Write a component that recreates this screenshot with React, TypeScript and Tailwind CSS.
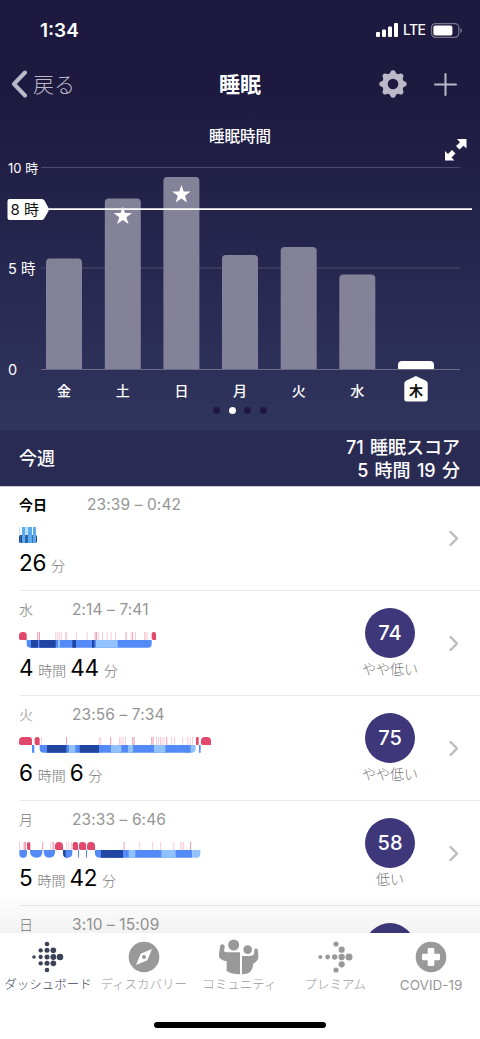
import { ReactNode } from 'react';

type Block = { x: number; w: number; fill: string; wake?: boolean; rl?: number; rr?: number };

interface SleepRow {
    day: string;
    range: string;
    total: [string, string][];
    blocks: Block[];
    ticks: number[];
    strongTicks: number[];
    score?: string;
    label?: string;
}

const DEEP = '#2146a1';
const LIGHT = '#538af8';
const REM = '#91c2fe';
const WAKE = '#e2486c';

const bars = [
    { day: '金', x: 46, h: 111 },
    { day: '土', x: 104.8, h: 171, star: 65.5 },
    { day: '日', x: 163.4, h: 192.5, star: 44 },
    { day: '月', x: 222, h: 114.5 },
    { day: '火', x: 280.7, h: 122.5 },
    { day: '水', x: 339.3, h: 95 },
    { day: '木', x: 398, h: 8.5, current: true },
];

const rows: SleepRow[] = [
    {
        day: '今日',
        range: '23:39 – 0:42',
        total: [['26', '分']],
        blocks: [],
        ticks: [],
        strongTicks: [],
    },
    {
        day: '水',
        range: '2:14 – 7:41',
        total: [['4', '時間'], ['44', '分']],
        blocks: [
            { x: 57, w: 23, fill: WAKE, wake: true, rl: 11, rr: 10 },
            { x: 80, w: 375, fill: LIGHT, rl: 12, rr: 12 },
            { x: 93, w: 21, fill: DEEP },
            { x: 118, w: 49, fill: DEEP },
            { x: 174, w: 6, fill: REM },
            { x: 217, w: 11, fill: DEEP },
            { x: 276, w: 7, fill: DEEP },
            { x: 288, w: 65, fill: REM },
            { x: 455, w: 13, fill: WAKE, wake: true, rl: 6, rr: 6 },
        ],
        ticks: [166, 172, 178, 184, 196, 199, 229, 260, 295, 306, 320, 332, 345, 392, 405, 432, 436, 440],
        strongTicks: [112, 117, 284, 288, 377, 397],
        score: '74',
        label: 'やや低い',
    },
    {
        day: '火',
        range: '23:56 – 7:34',
        total: [['6', '時間'], ['6', '分']],
        blocks: [
            { x: 57, w: 39, fill: WAKE, wake: true, rl: 12, rr: 10 },
            { x: 96, w: 7, fill: LIGHT },
            { x: 104, w: 15, fill: WAKE, wake: true, rl: 7, rr: 7 },
            { x: 119, w: 440, fill: LIGHT, rl: 12 },
            { x: 141, w: 58, fill: DEEP },
            { x: 207, w: 19, fill: REM },
            { x: 239, w: 58, fill: DEEP },
            { x: 333, w: 31, fill: REM },
            { x: 384, w: 15, fill: REM },
            { x: 462, w: 34, fill: REM },
            { x: 559, w: 28, fill: REM, rr: 12 },
            { x: 558, w: 14, fill: LIGHT },
            { x: 588, w: 8, fill: WAKE, wake: true, rl: 3, rr: 3 },
            { x: 597, w: 5, fill: LIGHT },
            { x: 603, w: 30, fill: WAKE, wake: true, rl: 12, rr: 12 },
        ],
        ticks: [124, 296, 301, 357, 362, 368, 375, 468, 474, 480, 485, 491, 514, 522, 546, 562, 569, 576],
        strongTicks: [198, 331, 397, 401, 454, 458, 499],
        score: '75',
        label: 'やや低い',
    },
    {
        day: '月',
        range: '23:33 – 6:46',
        total: [['5', '時間'], ['42', '分']],
        blocks: [
            { x: 58, w: 23, fill: LIGHT, rl: 11, rr: 11 },
            { x: 81, w: 10, fill: WAKE, wake: true, rl: 5, rr: 5 },
            { x: 90, w: 37, fill: LIGHT, rl: 20, rr: 17 },
            { x: 131, w: 34, fill: LIGHT, rl: 17, rr: 17 },
            { x: 165, w: 24, fill: WAKE, wake: true, rl: 12, rr: 12 },
            { x: 189, w: 14, fill: DEEP, rl: 12 },
            { x: 197, w: 20, fill: LIGHT, rr: 14 },
            { x: 218, w: 16, fill: WAKE, wake: true, rl: 7, rr: 7 },
            { x: 234, w: 3, fill: LIGHT },
            { x: 237, w: 21, fill: WAKE, wake: true, rl: 10, rr: 10 },
            { x: 258, w: 3, fill: LIGHT },
            { x: 261, w: 24, fill: WAKE, wake: true, rl: 11, rr: 11 },
            { x: 285, w: 292, fill: LIGHT, rl: 13 },
            { x: 303, w: 66, fill: DEEP },
            { x: 386, w: 20, fill: REM },
            { x: 484, w: 43, fill: REM },
            { x: 577, w: 24, fill: REM, rr: 12 },
        ],
        ticks: [57, 68, 151, 156, 199, 205, 213, 418, 457, 481, 520, 541, 545, 550],
        strongTicks: [73, 75, 127, 160, 371, 570],
        score: '58',
        label: '低い',
    },
    {
        day: '日',
        range: '3:10 – 15:09',
        total: [],
        blocks: [],
        ticks: [],
        strongTicks: [],
        score: '',
    },
];

// wake blocks round at the top, sleep blocks hang down and round at the bottom
function blockPath({ x, w, wake, rl = 0, rr = 0 }: Block) {
    const r = x + w;
    if (wake) {
        const b = Math.min(rl, 5);
        return `M${x} ${24 - b}V${rl}Q${x} 0 ${x + rl} 0H${r - rr}Q${r} 0 ${r} ${rr}V24H${x + b}Q${x} 24 ${x} ${24 - b}Z`;
    }
    return `M${x} 24H${r}V${47 - rr}Q${r} 47 ${r - rr} 47H${x + rl}Q${x} 47 ${x} ${47 - rl}Z`;
}

function Hypnogram({ row }: { row: SleepRow }) {
    return (
        <svg width="200" height="16" viewBox="57 0 600 48" className="block">
            {row.ticks.map((x) => (
                <rect key={x} x={x} y="0" width="2.5" height="24" fill="#f6c3cf" />
            ))}
            {row.strongTicks.map((x) => (
                <rect key={x} x={x} y="0" width="2.5" height="24" fill="#eb8ba1" />
            ))}
            {row.blocks.map((block, i) => (
                <path key={i} d={blockPath(block)} fill={block.fill} />
            ))}
        </svg>
    );
}

function NapGraph() {
    return (
        <svg width="18" height="16" viewBox="57 0 54 48" className="block">
            <rect x="57" y="24" width="54" height="24" rx="5" fill="#1c4b8b" />
            <path d="M58 0h3v24h-3zM77 0h4v24h-4z" fill="#bcdcf5" />
            <path d="M66 0h10v48h-10zM83 0h13v48h-13zM99 0h9v48h-9z" fill="#5cabec" />
            <path d="M60 24h3v24h-3zM78 24h2v24h-2z" fill="#2f6fb1" />
            <path d="M97 24h2v24h-2z" fill="#3f86c8" />
        </svg>
    );
}

function StatusBar() {
    return (
        <div className="flex h-[60px] items-center justify-between pl-10 pr-[18px]">
            <span className="text-[19px] font-semibold leading-none">1:34</span>
            <div className="flex items-center">
                <svg width="22" height="14" viewBox="0 0 22 14" fill="#fff">
                    <rect x="0" y="9" width="4" height="5" rx="1" />
                    <rect x="6" y="6.5" width="4" height="7.5" rx="1" />
                    <rect x="12" y="3.5" width="4" height="10.5" rx="1" />
                    <rect x="18" y="0" width="4" height="14" rx="1" />
                </svg>
                <span className="ml-[5px] w-[28px] text-[14px] font-medium leading-none tracking-[-0.6px]">LTE</span>
                <svg width="31" height="15" viewBox="0 0 31 15" fill="none">
                    <rect x="0.6" y="0.6" width="27.2" height="13.8" rx="4" stroke="#77758c" strokeWidth="1.2" />
                    <rect x="2.4" y="2.4" width="19" height="10.2" rx="2" fill="#fff" />
                    <path d="M29.3 5v5c1.1-.4 1.7-1.4 1.7-2.5s-.6-2.1-1.7-2.5z" fill="#77758c" />
                </svg>
            </div>
        </div>
    );
}

function NavBar() {
    return (
        <div className="grid h-12 grid-cols-3 items-center">
            <div className="flex items-center pl-[11px] text-[#bbb9c8]">
                <svg width="17" height="28" viewBox="0 0 17 28" fill="none" stroke="currentColor" strokeWidth="4" strokeLinecap="round" strokeLinejoin="round">
                    <path d="M14 2.5 3 14l11 11.5" />
                </svg>
                <span className="ml-[5px] text-[21px] font-light leading-none">戻る</span>
            </div>
            <h1 className="pt-px text-center text-[21px] font-bold leading-none">睡眠</h1>
            <div className="flex items-center justify-end gap-[27px] pr-[23px] text-[#bbb9c8]">
                <svg width="28" height="28" viewBox="-14 -14 28 28">
                    <circle r="8" fill="none" stroke="currentColor" strokeWidth="5.4" />
                    {[0, 45, 90, 135, 180, 225, 270, 315].map((a) => (
                        <path
                            key={a}
                            d="M-4.6-9.5Q-2.8-10.4-2.3-12.4Q-1.9-13.7 0-13.7Q1.9-13.7 2.3-12.4Q2.8-10.4 4.6-9.5Z"
                            fill="currentColor"
                            transform={`rotate(${a})`}
                        />
                    ))}
                </svg>
                <svg width="23" height="23" viewBox="0 0 23 23" stroke="currentColor" strokeWidth="2" strokeLinecap="round">
                    <path d="M11.5 1v21M1 11.5h21" />
                </svg>
            </div>
        </div>
    );
}

function SleepChart() {
    return (
        <svg width="480" height="254" viewBox="0 0 480 254" className="block" fill="#fff">
            <path d="M41 17.5H460M41 118H460" stroke="#4b4a6c" />
            {bars.map((bar) => (
                <path
                    key={bar.day}
                    d={`M${bar.x} 219.5v${4 - bar.h}q0-4 4-4h28q4 0 4 4v${bar.h - 4}z`}
                    fill={bar.current ? '#fff' : '#848299'}
                />
            ))}
            <path d="M41 219.5H460" stroke="#6b6a87" />
            <path d="M48 59.2H472" stroke="#fff" strokeWidth="1.8" />
            {bars.map((bar) =>
                bar.star ? (
                    <path
                        key={bar.day}
                        d="M0-9.5 2.2-3H9.2L3.6 1.2 5.7 8 0 3.9-5.7 8-3.6 1.2-9.2-3H-2.2Z"
                        transform={`translate(${bar.x + 18} ${bar.star + 0.5})`}
                    />
                ) : null
            )}
            <path d="M9.5 49H42q1.5 0 2.5 1.5L48.5 58q.8 1.5 0 3L44.5 68q-1 2-2.5 2H9.5q-2 0-2-2V51q0-2 2-2z" />
            <text x="8" y="23.3" fontSize="13">10 時</text>
            <text x="10.5" y="64.5" fontSize="15" fill="#111">8 時</text>
            <text x="8" y="123.5" fontSize="14.5">5 時</text>
            <text x="8" y="224.5" fontSize="14.5">0</text>
            <path d="M415.9 226 425.5 230.5Q427.7 231.5 427.7 233.5V249q0 2.5-2.5 2.5H406.8q-2.5 0-2.5-2.5V233.5q0-2 2.2-3z" />
            {bars.map((bar) => (
                <text
                    key={bar.day}
                    x={bar.x + 18}
                    y="246"
                    fontSize="14"
                    fontWeight={bar.current ? 700 : 500}
                    textAnchor="middle"
                    fill={bar.current ? '#111' : '#fff'}
                >
                    {bar.day}
                </text>
            ))}
        </svg>
    );
}

function ListRow({ row, today }: { row: SleepRow; today?: boolean }) {
    return (
        <div className={today ? 'flex h-[104px] shrink-0' : 'flex h-[105px] shrink-0'}>
            <div className="ml-5 flex flex-1 border-b-[1.5px] border-[#e9e9e9]">
                <div className="-ml-px flex-1">
                    <div className={today ? 'flex h-9 items-center leading-none' : 'flex h-[37px] items-center leading-none'}>
                        <span className={today ? 'w-[68px] text-sm font-bold text-black' : 'w-[53px] text-sm font-light text-[#777]'}>
                            {row.day}
                        </span>
                        <span className="text-[15.5px] tracking-[0.1px] text-[#959595]">{row.range}</span>
                    </div>
                    <div className="pt-1">{today ? <NapGraph /> : <Hypnogram row={row} />}</div>
                    <div className="flex h-9 items-baseline gap-1 pt-1 leading-8">
                        {row.total.map(([value, unit]) => (
                            <div key={unit} className="flex items-baseline gap-[5px]">
                                <span className="text-[22.5px] tracking-[-0.3px] text-black">{value}</span>
                                <span className="text-[14px] font-light text-[#777]">{unit}</span>
                            </div>
                        ))}
                    </div>
                </div>
                {row.score !== undefined && (
                    <div className="flex w-[96px] flex-col items-center pt-[17px]">
                        <div className="flex h-[50px] w-[50px] items-center justify-center rounded-full bg-[#3e387b] text-[20px] font-medium leading-none text-white">
                            {row.score}
                        </div>
                        {row.label && (
                            <span className="mt-[3px] whitespace-nowrap text-[14px] font-light leading-4 text-[#777]">{row.label}</span>
                        )}
                    </div>
                )}
                <div className="flex w-[42px] items-center pl-2.5">
                    <svg width="12" height="17" viewBox="0 0 12 17" fill="none" stroke="#bbb" strokeWidth="2.4" strokeLinecap="round" strokeLinejoin="round">
                        <path d="M2.5 2 9 8.5 2.5 15" />
                    </svg>
                </div>
            </div>
        </div>
    );
}

const dashboardDots = [
    [-3, -39, 7], [-22, -20, 6.5], [-3, -20, 7.5], [16, -20, 8.5],
    [-42, 0, 5.5], [-22, 0, 6.5], [-3, 0, 7.5], [16, 0, 8.8], [36, 0, 9.8],
    [-22, 19, 6.5], [-3, 19, 7.5], [16, 19, 8.5], [-3, 39, 7],
];

const premiumDots = [
    [3, -39, 7.8], [20, -22, 9.3], [-44, 0, 6], [-22, 0, 7.2], [-1, 0, 8.2],
    [20, 0, 9.5], [42, 0, 10.5], [20, 22, 9.3], [3, 39, 7.8],
];

function Dots({ dots }: { dots: number[][] }) {
    return (
        <>
            {dots.map(([x, y, r]) => (
                <circle key={`${x},${y}`} cx={x} cy={y} r={r} />
            ))}
        </>
    );
}

function Tab({ label, active, latin, children }: { label: string; active?: boolean; latin?: boolean; children: ReactNode }) {
    return (
        <div className={active ? 'flex flex-1 flex-col items-center text-[#3b4359]' : 'flex flex-1 flex-col items-center text-[#999]'}>
            <svg width="40" height="36" viewBox="-60 -54 120 108" fill="currentColor">
                {children}
            </svg>
            <span className={latin ? 'whitespace-nowrap text-[13.5px] leading-5' : 'whitespace-nowrap text-[12.5px] font-light leading-5'}>
                {label}
            </span>
        </div>
    );
}

function TabBar() {
    return (
        <div className="flex h-[106px] shrink-0 flex-col items-center justify-between bg-white pb-[11px] pt-[6px]">
            <div className="grid w-full grid-cols-5 pr-px">
                <Tab label="ダッシュボード" active>
                    <Dots dots={dashboardDots} />
                </Tab>
                <Tab label="ディスカバリー">
                    <path
                        fillRule="evenodd"
                        d="M0-46A46 46 0 1 1 0 46A46 46 0 1 1 0-46ZM24-24-10-10-24 24 10 10ZM0-6A6 6 0 1 1 0 6A6 6 0 1 1 0-6Z"
                    />
                </Tab>
                <Tab label="コミュニティ">
                    <circle cx="-16" cy="-36" r="16.5" />
                    <circle cx="26" cy="-22" r="13" />
                    <path d="M-57-31C-56-41-42-40-43-31L-45-18Q-43-14-36-14H3V52Q-22 52-37 42V13C-55 9-62 2-60-9Z" />
                    <path d="M9-3H34Q42-4 45-8L46-20C47-27 56-27 57-19L58-4C59 8 52 15 42 21C42 37 35 52 9 52Z" />
                </Tab>
                <Tab label="プレミアム">
                    <Dots dots={premiumDots} />
                </Tab>
                <Tab label="COVID-19" latin>
                    <circle r="46" />
                    <path
                        fill="#fff"
                        d="M-6-27H6Q10-27 10-23V-10H23Q27-10 27-6V6Q27 10 23 10H10V23Q10 27 6 27H-6Q-10 27-10 23V10H-23Q-27 10-27 6V-6Q-27-10-23-10H-10V-23Q-10-27-6-27Z"
                    />
                </Tab>
            </div>
            <div className="h-[6px] w-[172px] rounded-full bg-black" />
        </div>
    );
}

export default function App() {
    return (
        <div className="flex h-[1039px] w-[480px] flex-col overflow-hidden bg-white font-['Inter','Noto_Sans_CJK_JP',sans-serif]">
            <header className="relative h-[430px] shrink-0 bg-linear-to-b from-[#1d193f] from-20% to-[#30355e] text-white">
                <StatusBar />
                <NavBar />
                <h2 className="flex h-[42px] items-center justify-center pt-4 text-[15.5px] font-medium leading-none">睡眠時間</h2>
                <svg width="22" height="22" viewBox="0 0 22 22" fill="#fff" className="absolute left-[445px] top-[139px]">
                    <path d="M21.5 0V9.5L18.5 6.7 14.5 10.5 11 7 15 3.2 12 0Z" />
                    <path d="M0 21.5V12L3 14.9 7 11 10.5 14.5 6.5 18.4 9.5 21.5Z" />
                </svg>
                <SleepChart />
                <div className="flex justify-center gap-[8.5px] pt-[3px]">
                    <span className="h-[7px] w-[7px] rounded-full bg-[#1e183f]" />
                    <span className="h-[7px] w-[7px] rounded-full bg-white" />
                    <span className="h-[7px] w-[7px] rounded-full bg-[#1e183f]" />
                    <span className="h-[7px] w-[7px] rounded-full bg-[#1e183f]" />
                </div>
            </header>
            <div className="flex h-14 shrink-0 items-center justify-between bg-[#2a2b53] pl-[19px] pr-5 pt-0.5 text-lg font-medium text-white">
                <span className="leading-none">今週</span>
                <div className="text-right leading-[23px] [word-spacing:1.5px]">
                    <div>71 睡眠スコア</div>
                    <div>5 時間 19 分</div>
                </div>
            </div>
            <main className="relative min-h-0 flex-1 overflow-hidden border-t border-[#cac7d8]">
                {rows.map((row, i) => (
                    <ListRow key={row.day} row={row} today={i === 0} />
                ))}
                <div className="absolute inset-x-0 bottom-0 h-10 bg-linear-to-b from-transparent to-black/5" />
            </main>
            <TabBar />
        </div>
    );
}
